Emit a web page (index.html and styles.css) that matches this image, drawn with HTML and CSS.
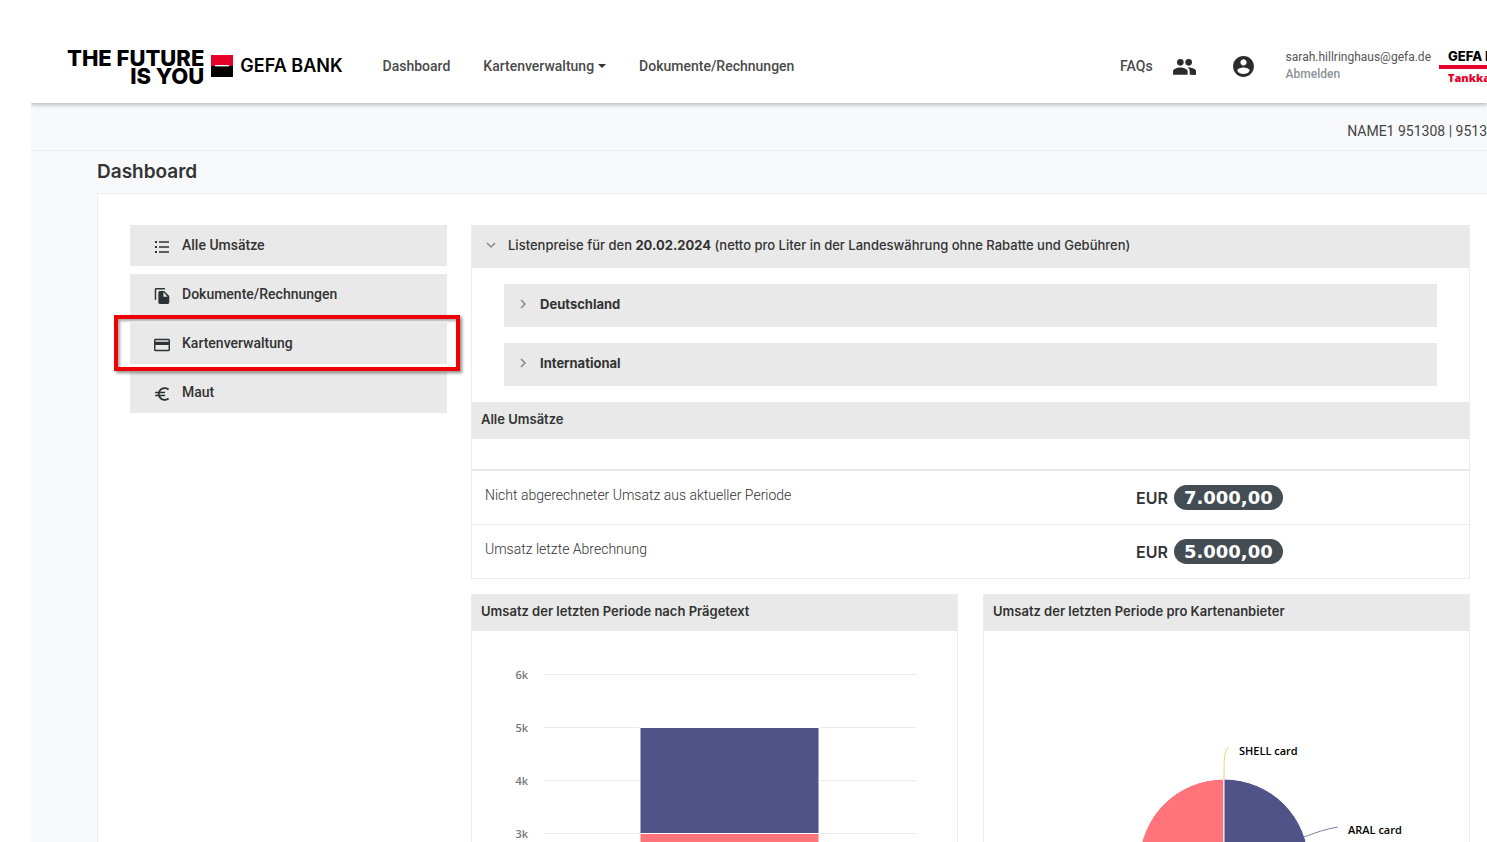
FILE: index.html
```html
<!DOCTYPE html>
<html lang="de">
<head>
    <meta charset="UTF-8">
    <meta name="viewport" content="width=device-width, initial-scale=1.0">
    <title>Dashboard</title>
    <link rel="stylesheet" href="styles.css">
</head>

<body>
    <header class="header">
        <a class="brand" href="#">
            <span class="brand-claim">THE FUTURE<br>IS YOU</span>
            <svg class="brand-mark" viewBox="0 0 22 22" aria-hidden="true">
                <rect width="22" height="11" fill="#e60028"/>
                <rect y="11" width="22" height="11" fill="#000"/>
                <rect x="4" y="10" width="14" height="1.4" fill="#fff"/>
            </svg>
            <span class="brand-name">GEFA BANK</span>
        </a>
        <nav class="nav">
            <a class="nav-link" href="#">Dashboard</a>
            <button class="nav-link nav-dropdown" type="button">Kartenverwaltung<span class="caret"></span></button>
            <a class="nav-link" href="#">Dokumente/Rechnungen</a>
        </nav>
        <div class="user-nav">
            <a class="nav-link" href="#">FAQs</a>
            <button class="icon-btn" type="button" aria-label="Benutzer">
                <svg viewBox="0 0 24 24"><path d="M16.500 13.130C18.040 14.060 19 15.320 19 17v3h4v-3c0-2.180-3.570-3.470-6.500-3.870z"/><circle cx="8" cy="8" r="3.200"/><circle cx="16" cy="8" r="3.200"/><path d="M8 13c-2.330 0-7 1.170-7 3.500V20h14v-3.500c0-2.330-4.670-3.500-7-3.500zM16 13c-.29 0-.62.020-.97.050 1.160.84 1.970 1.970 1.970 3.450V20h6v-3.500c0-2.330-4.670-3.500-7-3.500z"/></svg>
            </button>
            <button class="icon-btn icon-btn-account" type="button" aria-label="Konto">
                <svg viewBox="0 0 24 24"><path d="M12 2C6.480 2 2 6.480 2 12s4.480 10 10 10 10-4.480 10-10S17.520 2 12 2zm0 3c1.660 0 3 1.340 3 3s-1.340 3-3 3-3-1.340-3-3 1.340-3 3-3zm0 14.200c-2.500 0-4.710-1.280-6-3.220.03-1.990 4-3.080 6-3.080 1.990 0 5.970 1.090 6 3.080-1.290 1.940-3.500 3.220-6 3.220z"/></svg>
            </button>
            <div class="account">
                <span class="account-mail">sarah.hillringhaus@gefa.de</span>
                <a class="logout" href="#">Abmelden</a>
            </div>
            <div class="partner">
                <span class="partner-name">GEFA BANK</span>
                <span class="partner-product">Tankkarte</span>
            </div>
        </div>
    </header>

    <div class="page">
        <div class="customer-bar">NAME1 951308 | 9513</div>
        <h1 class="title">Dashboard</h1>

        <main class="card">
            <nav class="side-menu">
                <a class="menu-item" href="#">
                    <svg class="menu-icon" viewBox="0 0 16 16"><path d="M1 2h2v2H1zM1 7h2v2H1zM1 12h2v2H1zM5 2.300h10v1.400H5zM5 7.300h10v1.400H5zM5 12.300h10v1.400H5z"/></svg>
                    Alle Umsätze
                </a>
                <a class="menu-item" href="#">
                    <svg class="menu-icon" viewBox="1 1 22 22"><path d="M16 1H4c-1.100 0-2 .9-2 2v14h2V3h12V1zm-1 4l7 7v9c0 1.100-.9 2-2 2H8.990C7.890 23 7 22.100 7 21V7c0-1.100.9-2 2-2h6zm-1 8h5.500L14 6.500V13z"/></svg>
                    Dokumente/Rechnungen
                </a>
                <a class="menu-item menu-item-marked" href="#">
                    <svg class="menu-icon" viewBox="1 1 22 22"><path d="M21 3.500H3c-1.200 0-2 .9-2 2v13c0 1.200.9 2 2 2h18c1.200 0 2-.9 2-2v-13c0-1.100-.9-2-2-2zm0 15H3v-6.500h18v6.500zm0-11H3v-2h18v2z"/></svg>
                    Kartenverwaltung
                </a>
                <a class="menu-item" href="#">
                    <svg class="menu-icon" viewBox="1 2 21 20"><path d="M15 18.500c-2.510 0-4.680-1.420-5.760-3.500H15l1-2H8.580c-.05-.33-.08-.66-.08-1s.03-.67.080-1H15l1-2H9.240C10.320 6.920 12.500 5.500 15 5.500c1.610 0 3.090.59 4.230 1.570L21 5.300C19.410 3.870 17.300 3 15 3c-3.920 0-7.240 2.510-8.480 6H3l-1 2h4.060c-.04.33-.06.66-.06 1s.02.67.060 1H3l-1 2h4.520c1.240 3.490 4.560 6 8.480 6 2.310 0 4.410-.87 6-2.300l-1.780-1.770c-1.130.98-2.600 1.570-4.220 1.570z"/></svg>
                    Maut
                </a>
            </nav>

            <div class="content">
                <section class="panel panel-sales">
                    <button class="accordion" type="button">
                        <svg class="chevron" viewBox="0 0 10 10"><path d="M1 3l4 4 4-4"/></svg>
                        <span>Listenpreise für den <b>20.02.2024</b> (netto pro Liter in der Landeswährung ohne Rabatte und Gebühren)</span>
                    </button>
                    <div class="accordion-body">
                        <button class="accordion accordion-sub" type="button">
                            <svg class="chevron" viewBox="0 0 10 10"><path d="M3 1l4 4-4 4"/></svg>
                            Deutschland
                        </button>
                        <button class="accordion accordion-sub" type="button">
                            <svg class="chevron" viewBox="0 0 10 10"><path d="M3 1l4 4-4 4"/></svg>
                            International
                        </button>
                    </div>

                    <h2 class="panel-title">Alle Umsätze</h2>
                    <table class="sales">
                        <tbody>
                            <tr>
                                <td>Nicht abgerechneter Umsatz aus aktueller Periode</td>
                                <td class="amount">EUR <span class="badge">7.000,00</span></td>
                            </tr>
                            <tr>
                                <td>Umsatz letzte Abrechnung</td>
                                <td class="amount">EUR <span class="badge">5.000,00</span></td>
                            </tr>
                        </tbody>
                    </table>
                </section>

                <div class="charts">
                    <section class="panel">
                        <h2 class="panel-title">Umsatz der letzten Periode nach Prägetext</h2>
                        <svg class="chart" viewBox="0 0 485 400">
                            <g class="grid-lines">
                                <path d="M72 43.500H444M72 96.500H444M72 149.500H444M72 202.500H444M72 255.500H444M72 308.500H444M72 361.500H444"/>
                            </g>
                            <g class="axis-labels">
                                <text x="56" y="48">6k</text>
                                <text x="56" y="101">5k</text>
                                <text x="56" y="154">4k</text>
                                <text x="56" y="207">3k</text>
                            </g>
                            <rect class="series-a" x="168" y="96.500" width="179" height="106"/>
                            <rect class="series-b" x="168" y="202.500" width="179" height="159"/>
                        </svg>
                    </section>

                    <section class="panel">
                        <h2 class="panel-title">Umsatz der letzten Periode pro Kartenanbieter</h2>
                        <svg class="chart" viewBox="0 0 485 400">
                            <path class="series-b" d="M240 233V148A85 85 0 0 0 240 318Z"/>
                            <path class="series-a" d="M240 233V148A85 85 0 0 1 240 318Z"/>
                            <path class="connector-shell" d="M240 148C240 130 240 117 245 117"/>
                            <path class="connector-aral" d="M320 206C331 202 341 198 354 196"/>
                            <text class="pie-label" x="255" y="124">SHELL card</text>
                            <text class="pie-label" x="364" y="203">ARAL card</text>
                        </svg>
                    </section>
                </div>
            </div>
        </main>
    </div>
</body>
</html>
```
FILE: styles.css
```css
* {
    box-sizing: border-box;
}

body {
    margin: 0;
    height: 100vh;
    padding-left: 31px;
    overflow: hidden;
    background: #fff;
    color: #333;
    font-family: Roboto, sans-serif;
    font-size: 14px;
    line-height: 20px;
}

a {
    color: inherit;
    text-decoration: none;
}

button {
    padding: 0;
    border: none;
    background: none;
    color: inherit;
    font: inherit;
    cursor: pointer;
}

/* Header */
.header {
    position: relative;
    display: flex;
    align-items: center;
    height: 103px;
    padding: 29px 0 0 36px;
    background: #fff;
    box-shadow: 0 2px 4px rgba(0, 0, 0, 0.25);
    clip-path: inset(0 0 -8px 0);
}

.brand {
    display: flex;
    align-items: center;
    gap: 7px;
    margin-right: 40px;
    color: #000;
    white-space: nowrap;
}

.brand-claim {
    padding-top: 2px;
    font-family: Inter, sans-serif;
    font-size: 22px;
    font-weight: 800;
    line-height: 18px;
    text-align: right;
}

.brand-mark {
    width: 22px;
    height: 22px;
}

.brand-name {
    font-family: Inter, sans-serif;
    font-size: 18px;
    font-weight: 600;
}

.nav {
    display: flex;
    gap: 33px;
}

.nav-link {
    color: #4a4a4a;
    font-weight: 500;
    white-space: nowrap;
}

.nav-dropdown {
    display: flex;
    align-items: center;
    gap: 4px;
}

.caret {
    border: 4px solid transparent;
    border-top-color: #333;
    border-bottom: none;
}

.user-nav {
    display: flex;
    align-items: center;
    margin-left: auto;
}

.icon-btn {
    display: flex;
    margin-left: 19px;
}

.icon-btn-account {
    margin-left: 34px;
}

.icon-btn svg {
    width: 25px;
    height: 25px;
    fill: #2b2b2b;
}

.account {
    display: flex;
    flex-direction: column;
    margin: 0 8px 0 30px;
    font-size: 12px;
    line-height: 17px;
}

.account-mail {
    color: #555;
}

.logout {
    color: #8b9396;
    font-weight: 500;
}

.partner {
    display: flex;
    flex-direction: column;
    width: 48px;
    padding-top: 2px;
    overflow: hidden;
    font-family: Inter, sans-serif;
    font-size: 13px;
    font-weight: 800;
    line-height: 18px;
    white-space: nowrap;
}

.partner-name {
    padding-left: 9px;
    border-bottom: 4px solid #e60028;
    color: #000;
}

.partner-product {
    padding-left: 9px;
    color: #e60028;
    font-family: "Open Sans", sans-serif;
    font-size: 11px;
}

/* Page */
.page {
    background: #f8f9fb;
}

.customer-bar {
    height: 48px;
    padding-top: 18px;
    border-bottom: 1px solid #e9eaec;
    color: #444;
    text-align: right;
}

.title {
    margin: 0;
    padding: 8px 66px 9px;
    font-family: Inter, sans-serif;
    font-size: 19px;
    font-weight: 600;
    line-height: 25px;
}

.card {
    display: flex;
    gap: 24px;
    margin-left: 66px;
    padding: 31px 17px 31px 32px;
    border: 1px solid #ececec;
    border-right: none;
    background: #fff;
}

/* Side menu */
.side-menu {
    display: flex;
    flex: 0 0 317px;
    flex-direction: column;
    gap: 8px;
}

.menu-item {
    position: relative;
    display: flex;
    gap: 12px;
    height: 41px;
    padding: 10px 24px;
    background: #e9e9e9;
    font-weight: 500;
}

.menu-icon {
    width: 16px;
    height: 16px;
    margin-top: 4px;
    fill: #2b3336;
}

.menu-item-marked::after {
    content: "";
    position: absolute;
    inset: -8px -13px -7px -16px;
    border: 4px solid #f00000;
    box-shadow: 2px 2px 3px rgba(0, 0, 0, 0.45), inset 2px 2px 3px rgba(0, 0, 0, 0.35);
    z-index: 1;
}

/* Content */
.content {
    flex: 1;
    min-width: 0;
}

.panel {
    border: 1px solid #ececec;
    border-top: none;
}

.panel-sales {
    border-bottom: none;
}

.accordion {
    display: flex;
    align-items: center;
    gap: 12px;
    width: 100%;
    height: 43px;
    padding: 0 14px 3px;
    background: #e9e9e9;
    font-family: Inter, sans-serif;
    font-size: 13px;
    font-weight: 500;
    white-space: nowrap;
}

.accordion b {
    font-weight: 700;
}

.accordion-sub {
    font-weight: 700;
}

.chevron {
    flex: none;
    width: 10px;
    height: 10px;
    fill: none;
    stroke: #888;
    stroke-width: 1.5;
}

.accordion-body {
    display: flex;
    flex-direction: column;
    gap: 16px;
    padding: 16px 32px;
}

.panel-title {
    margin: 0;
    padding: 7px 9px 10px;
    background: #e9e9e9;
    font-family: Inter, sans-serif;
    font-size: 13px;
    font-weight: 600;
    line-height: 20px;
}

.sales {
    width: 100%;
    margin-top: 30px;
    border-top: 2px solid #e9e9e9;
    border-spacing: 0;
    font-weight: 300;
}

.sales td {
    width: 66.6%;
    height: 54px;
    padding: 0 0 6px 13px;
    border-bottom: 1px solid #ececec;
}

.sales .amount {
    width: auto;
    padding: 0;
    font-family: Inter, sans-serif;
    font-size: 16px;
    font-weight: 600;
}

.badge {
    display: inline-block;
    margin-left: 2px;
    padding: 0 10px;
    border-radius: 13px;
    background: #434d53;
    color: #fff;
    font-family: "DejaVu Sans", sans-serif;
    font-size: 18px;
    font-weight: 700;
    line-height: 25px;
}

/* Charts */
.charts {
    display: grid;
    grid-template-columns: 1fr 1fr;
    gap: 25px;
    margin-top: 15px;
}

.chart {
    display: block;
    width: 100%;
    font-family: "Open Sans", sans-serif;
    font-size: 11px;
}

.grid-lines {
    stroke: #e9e9e9;
    stroke-width: 1;
}

.axis-labels {
    fill: #777;
    font-weight: 600;
    text-anchor: end;
}

.series-a {
    fill: #4f5388;
    stroke: #fff;
}

.series-b {
    fill: #ff747a;
    stroke: #fff;
}

.connector-shell,
.connector-aral {
    fill: none;
    stroke: #f0d264;
}

.connector-aral {
    stroke: #7f82ad;
}

.pie-label {
    fill: #000;
    font-weight: 600;
}
```
